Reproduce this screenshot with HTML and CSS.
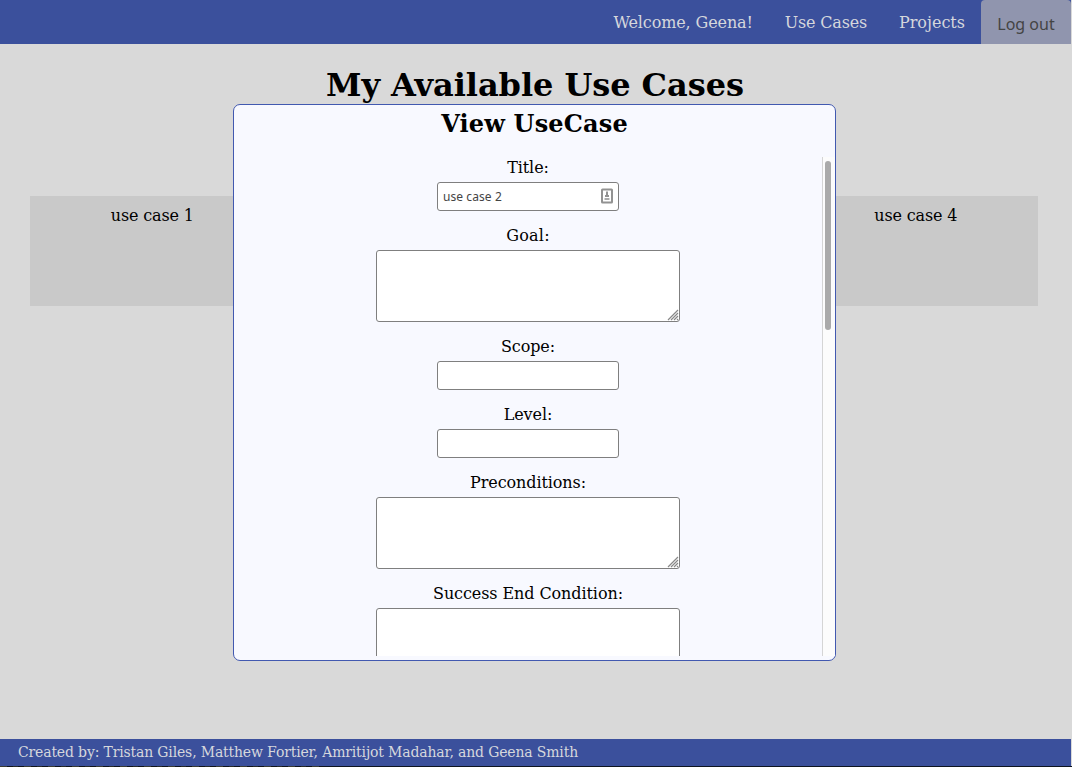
FILE: index.html
```html
<!DOCTYPE html>
<html lang="en">
<head>
<meta charset="utf-8">
<title>Use Cases</title>
<link rel="stylesheet" href="styles.css">
</head>
<body>
<div class="page">
  <nav class="nav">
    <a class="nav-link welcome">Welcome, Geena!</a>
    <a class="nav-link cases">Use Cases</a>
    <a class="nav-link">Projects</a>
    <button class="logout">Log out</button>
  </nav>
  <main class="main">
    <h1 class="heading">My Available Use Cases</h1>
    <div class="cards">
      <div class="card">use case 1</div>
      <div class="card"></div>
      <div class="card"></div>
      <div class="card">use case 4</div>
    </div>
  </main>
  <footer class="footer">Created by: Tristan Giles, Matthew Fortier, Amritijot Madahar, and Geena Smith</footer>
  <div class="edge"></div>
  <section class="modal">
    <h2 class="modal-title">View UseCase</h2>
    <div class="modal-body">
      <div class="fields">
        <div class="field"><div class="label">Title:</div><div class="input"><span>use case 2</span>
          <svg class="autofill" width="12" height="16" viewBox="0 0 12 16"><rect x="1" y="1.5" width="10" height="13" rx=".5" fill="#fff" stroke="#929292" stroke-width="2"/><path d="M6 3.5v4M4 8h4" stroke="#929292" stroke-width="2"/><path d="M3.5 11h5" stroke="#aaa" stroke-width="2"/></svg></div></div>
        <div class="field"><div class="label goal">Goal:</div><div class="textarea"><svg class="grip" width="12" height="12" viewBox="0 0 12 12"><path d="M1 11L11 1M4 11l7-7M7 11l4-4M10 11l1-1"/></svg></div></div>
        <div class="field"><div class="label">Scope:</div><div class="input"></div></div>
        <div class="field"><div class="label">Level:</div><div class="input"></div></div>
        <div class="field"><div class="label">Preconditions:</div><div class="textarea"><svg class="grip" width="12" height="12" viewBox="0 0 12 12"><path d="M1 11L11 1M4 11l7-7M7 11l4-4M10 11l1-1"/></svg></div></div>
        <div class="field"><div class="label">Success End Condition:</div><div class="textarea"></div></div>
      </div>
      <div class="scrollbar"><div class="thumb"></div></div>
    </div>
  </section>
</div>
</body>
</html>
```
FILE: styles.css
```css
* { box-sizing: border-box; }
body { margin: 0; background: #d9d9d9; font: 16px/19px "DejaVu Serif", serif; color: #000; overflow: hidden; }
.page { position: relative; height: 767px; display: flex; flex-direction: column; }
.nav { height: 44px; margin-right: 1px; background: #3b509c; display: flex; justify-content: flex-end; flex: none; }
.nav-link { padding: 13px 16px 0; color: #d5d7dc; }
.welcome { letter-spacing: -0.12px; }
.cases { letter-spacing: -0.2px; }
.logout { width: 90px; height: 44px; padding: 4px 0 0; border: 0; border-radius: 4px 4px 0 0; background: #9095ae; color: #444; font: 16px "Noto Sans", sans-serif; }
.main { flex: 1; }
.heading { margin: 22px 2px 0 0; font-size: 32px; line-height: 38px; text-align: center; letter-spacing: -0.06px; }
.cards { display: grid; grid-template-columns: repeat(4, 1fr); gap: 10px; margin: 92px 34px 0 30px; }
.card { height: 110px; padding-top: 10px; background: #c9c9c9; text-align: center; letter-spacing: -0.15px; }
.footer { height: 27px; margin-right: 1px; padding: 3px 18px; background: #3b509c; color: #d5d7dc; font-size: 14px; line-height: 20px; letter-spacing: -0.16px; flex: none; }
.edge { height: 1px; flex: none; background: repeating-linear-gradient(90deg, #3b3d35 0 7px, #11151c 7px 13px, #292c2a 13px 18px, #11151c 18px 24px) 0 0 / 325px 1px no-repeat #0e1521; }
.modal { position: absolute; left: 233px; top: 104px; width: 603px; height: 557px; display: flex; flex-direction: column; background: #f8f9ff; border: 1px solid #4259b0; border-radius: 7px; }
.modal-title { height: 52px; margin: 0; padding-top: 4px; font-size: 24px; line-height: 29px; text-align: center; letter-spacing: 0.16px; flex: none; }
.modal-body { height: 499px; display: flex; overflow: hidden; }
.fields { flex: 1; padding-top: 1px; display: flex; flex-direction: column; gap: 15px; }
.field { display: flex; flex-direction: column; align-items: center; gap: 5px; flex: none; }
.label { letter-spacing: -0.09px; }
.goal { letter-spacing: 0.2px; }
.input, .textarea { background: #fff; border: 1px solid #7f7f7f; border-radius: 3px; }
.input { width: 182px; height: 29px; padding: 0 5px; display: flex; align-items: center; justify-content: space-between; font: 12px "Noto Sans", sans-serif; letter-spacing: 0.08px; color: #444; }
.autofill { margin-bottom: 2px; }
.textarea { width: 304px; height: 72px; display: flex; justify-content: flex-end; align-items: flex-end; }
.grip { stroke: #888; stroke-width: 1.2; fill: none; }
.scrollbar { width: 13px; padding: 4px 0 0 2px; background: #fcfcfc; border-left: 1px solid #d5d5d5; }
.thumb { width: 6px; height: 169px; border-radius: 3px; background: #aaa; }
```
